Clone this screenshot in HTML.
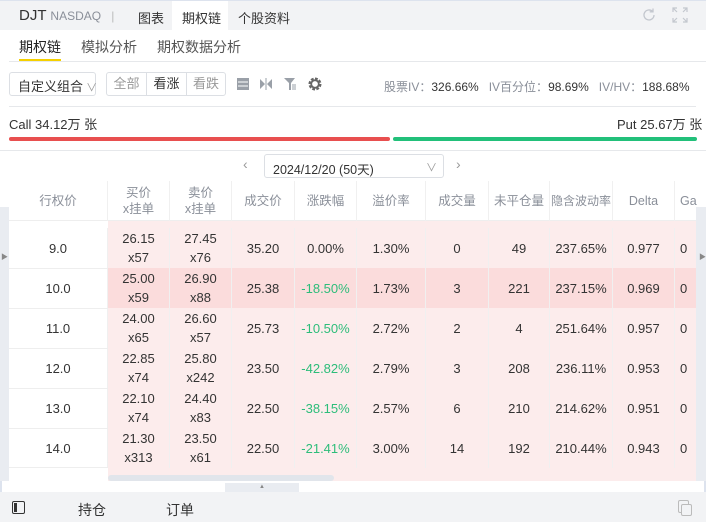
<!DOCTYPE html>
<html><head><meta charset="utf-8"><style>
*{box-sizing:border-box;margin:0;padding:0}
body{width:706px;height:522px;overflow:hidden;background:#fff;font-family:"Liberation Sans","Noto Sans CJK SC",sans-serif;color:#333;font-size:13px;position:relative}
.a{position:absolute}
.top{left:0;top:0;width:706px;height:30px;background:#f2f3f5;border-top:1px solid #dde3ee}
.t{white-space:nowrap}
.grid{position:absolute;left:9px;top:181px;width:687px}
.row{position:absolute;left:0;height:40px;display:flex;width:700px}
.c{height:40px;display:flex;flex-direction:column;justify-content:center;align-items:center;text-align:center;font-size:13px;line-height:19px;border-right:1px solid #f0f0f0;flex:none;white-space:nowrap}
.h .c{color:#8a8f99;font-size:12.5px;line-height:16px}
.w0{width:99px}.w1{width:62px}.w2{width:62px}.w3{width:63px}.w4{width:62px}.w5{width:69px}.w6{width:63px}.w7{width:61px}.w8{width:63px}.w9{width:62px}.w10{width:40px;align-items:flex-start!important;text-align:left;padding-left:5px;border:0}
.g{color:#2dbd7a}
</style></head><body>
<div class="a top"></div>
<div class="a" style="left:172px;top:1px;width:56px;height:29px;background:#fff"></div>
<div class="a t" style="left:19px;top:7px;font-size:15px;color:#333">DJT <span style="font-size:12px;color:#8a8f99">NASDAQ</span> <span style="color:#bbb;font-size:12px;margin-left:6px">|</span></div>
<div class="a t" style="left:138px;top:8px;font-size:13px">图表</div>
<div class="a t" style="left:182px;top:8px;font-size:13px">期权链</div>
<div class="a t" style="left:238px;top:8px;font-size:13px">个股资料</div>
<svg class="a" style="left:641px;top:7px" width="16" height="16" viewBox="0 0 16 16"><path d="M13 8a5 5 0 1 1-1.5-3.6M12 1.5v3.3H8.7" fill="none" stroke="#c3c7ce" stroke-width="1.3"/></svg>
<svg class="a" style="left:672px;top:7px" width="16" height="16" viewBox="0 0 16 16"><path d="M1 5V1h4M11 1h4v4M15 11v4h-4M5 15H1v-4M1 1l4 4M15 1l-4 4M15 15l-4-4M1 15l4-4" fill="none" stroke="#c3c7ce" stroke-width="1.2"/></svg>
<div class="a t" style="left:19px;top:37px;font-size:14px;color:#222">期权链</div>
<div class="a" style="left:19px;top:59px;width:42px;height:3px;background:#f5d000"></div>
<div class="a t" style="left:81px;top:37px;font-size:14px;color:#555">模拟分析</div>
<div class="a t" style="left:157px;top:37px;font-size:14px;color:#555">期权数据分析</div>
<div class="a" style="left:9px;top:61px;width:697px;height:1px;background:#e6e8eb"></div>
<div class="a t" style="left:9px;top:72px;width:87px;height:24px;border:1px solid #dcdfe4;border-radius:3px;font-size:13px;padding:3px 0 0 8px">自定义组合<span style="color:#999;font-size:11px"> ∨</span></div>
<div class="a" style="left:106px;top:72px;width:120px;height:24px;border:1px solid #dcdfe4;border-radius:3px;display:flex;font-size:13px">
<div style="width:40px;text-align:center;line-height:22px;color:#999;border-right:1px solid #dcdfe4">全部</div>
<div style="width:40px;text-align:center;line-height:22px;color:#333;border-right:1px solid #dcdfe4">看涨</div>
<div style="width:38px;text-align:center;line-height:22px;color:#999">看跌</div></div>
<svg class="a" style="left:236px;top:77px" width="14" height="14"><rect x="1" y="1" width="12" height="12" fill="#9aa0a8"/><path d="M2 5h10M2 9h10" stroke="#fff"/></svg>
<svg class="a" style="left:259px;top:77px" width="14" height="14"><path d="M1 2l5 5-5 5zM13 2l-5 5 5 5z" fill="#9aa0a8"/><path d="M7 1v12" stroke="#9aa0a8"/></svg>
<svg class="a" style="left:283px;top:77px" width="14" height="14"><path d="M1 1h11L8 6v7H6V6z" fill="#9aa0a8"/><path d="M9 8h4M9 10h4M9 12h4" stroke="#9aa0a8"/></svg>
<svg class="a" style="left:307px;top:76px" width="16" height="16" viewBox="0 0 16 16"><circle cx="8" cy="8" r="5" fill="none" stroke="#666" stroke-width="3" stroke-dasharray="2.6 1.3"/><circle cx="8" cy="8" r="3.8" fill="none" stroke="#666" stroke-width="1.8"/></svg>
<div class="a t" style="left:384px;top:78px;font-size:12px;color:#8a8f99">股票IV：<span style="color:#333">326.66%</span>&nbsp;&nbsp; IV百分位：<span style="color:#333">98.69%</span>&nbsp;&nbsp; IV/HV：<span style="color:#333">188.68%</span></div>
<div class="a" style="left:9px;top:106px;width:687px;height:1px;background:#e6e8eb"></div>
<div class="a t" style="left:9px;top:114px;font-size:13px">Call 34.12万 张</div>
<div class="a t" style="left:617px;top:114px;font-size:13px">Put 25.67万 张</div>
<div class="a" style="left:9px;top:137px;width:381px;height:4px;background:#e84f4f;border-radius:2px"></div>
<div class="a" style="left:393px;top:137px;width:304px;height:4px;background:#22c07a;border-radius:2px"></div>
<div class="a" style="left:0;top:150px;width:706px;height:1px;background:#e6e8eb"></div>
<div class="a" style="left:243px;top:156px;color:#999;font-size:14px">‹</div>
<div class="a t" style="left:264px;top:154px;width:180px;height:24px;border:1px solid #dcdfe4;border-radius:3px;padding:4px 0 0 8px;font-size:12.5px">2024/12/20 (50天)<span style="position:absolute;right:6px;color:#999;font-size:11px">∨</span></div>
<div class="a" style="left:456px;top:156px;color:#999;font-size:14px">›</div>
<div class="a" style="left:9px;top:220px;width:687px;height:1px;background:#eee"></div>
<div class="a" style="left:108px;top:221px;width:588px;height:265px;background:#fcecec"></div>
<div class="a" style="left:108px;top:268px;width:588px;height:40px;background:#fbdcdc"></div>
<div class="a" style="left:0;top:207px;width:9px;height:283px;background:#e9ecf1"></div>
<div class="a" style="left:1px;top:252px;font-size:7px;color:#888">▶</div>
<div class="a" style="left:696px;top:207px;width:10px;height:283px;background:#e9ecf1"></div>
<div class="a" style="left:699px;top:252px;font-size:7px;color:#888">▶</div>
<div class="grid">
<div class="row h" style="top:0">
<div class="c w0">行权价</div><div class="c w1">买价<br>x挂单</div><div class="c w2">卖价<br>x挂单</div><div class="c w3">成交价</div><div class="c w4">涨跌幅</div><div class="c w5">溢价率</div><div class="c w6">成交量</div><div class="c w7">未平仓量</div><div class="c w8" style="font-size:12px">隐含波动率</div><div class="c w9">Delta</div><div class="c w10">Ga</div></div>
<div class="row" style="top:47px"><div class="c w0">9.0</div><div class="c w1">26.15<br>x57</div><div class="c w2">27.45<br>x76</div><div class="c w3">35.20</div><div class="c w4">0.00%</div><div class="c w5">1.30%</div><div class="c w6">0</div><div class="c w7">49</div><div class="c w8">237.65%</div><div class="c w9">0.977</div><div class="c w10">0</div></div>
<div class="row" style="top:87px"><div class="c w0">10.0</div><div class="c w1">25.00<br>x59</div><div class="c w2">26.90<br>x88</div><div class="c w3">25.38</div><div class="c w4 g">-18.50%</div><div class="c w5">1.73%</div><div class="c w6">3</div><div class="c w7">221</div><div class="c w8">237.15%</div><div class="c w9">0.969</div><div class="c w10">0</div></div>
<div class="row" style="top:127px"><div class="c w0">11.0</div><div class="c w1">24.00<br>x65</div><div class="c w2">26.60<br>x57</div><div class="c w3">25.73</div><div class="c w4 g">-10.50%</div><div class="c w5">2.72%</div><div class="c w6">2</div><div class="c w7">4</div><div class="c w8">251.64%</div><div class="c w9">0.957</div><div class="c w10">0</div></div>
<div class="row" style="top:167px"><div class="c w0">12.0</div><div class="c w1">22.85<br>x74</div><div class="c w2">25.80<br>x242</div><div class="c w3">23.50</div><div class="c w4 g">-42.82%</div><div class="c w5">2.79%</div><div class="c w6">3</div><div class="c w7">208</div><div class="c w8">236.11%</div><div class="c w9">0.953</div><div class="c w10">0</div></div>
<div class="row" style="top:207px"><div class="c w0">13.0</div><div class="c w1">22.10<br>x74</div><div class="c w2">24.40<br>x83</div><div class="c w3">22.50</div><div class="c w4 g">-38.15%</div><div class="c w5">2.57%</div><div class="c w6">6</div><div class="c w7">210</div><div class="c w8">214.62%</div><div class="c w9">0.951</div><div class="c w10">0</div></div>
<div class="row" style="top:247px"><div class="c w0">14.0</div><div class="c w1">21.30<br>x313</div><div class="c w2">23.50<br>x61</div><div class="c w3">22.50</div><div class="c w4 g">-21.41%</div><div class="c w5">3.00%</div><div class="c w6">14</div><div class="c w7">192</div><div class="c w8">210.44%</div><div class="c w9">0.943</div><div class="c w10">0</div></div>
</div>
<div class="a" style="left:9px;top:268px;width:99px;height:1px;background:#eee"></div>
<div class="a" style="left:9px;top:308px;width:99px;height:1px;background:#eee"></div>
<div class="a" style="left:9px;top:348px;width:99px;height:1px;background:#eee"></div>
<div class="a" style="left:9px;top:388px;width:99px;height:1px;background:#eee"></div>
<div class="a" style="left:9px;top:428px;width:99px;height:1px;background:#eee"></div>
<div class="a" style="left:9px;top:467px;width:99px;height:1px;background:#eee"></div>
<div class="a" style="left:108px;top:475px;width:226px;height:6px;background:#e1e5eb;border-radius:3px"></div>
<div class="a" style="left:0;top:481px;width:706px;height:11px;background:#fff"></div>
<div class="a" style="left:0;top:481px;width:2px;height:11px;background:#dde3ee"></div>
<div class="a" style="left:704px;top:481px;width:2px;height:11px;background:#dde3ee"></div>
<div class="a" style="left:225px;top:483px;width:74px;height:9px;background:#e9ecf1;text-align:center;font-size:6px;line-height:9px;color:#888">▲</div>
<div class="a" style="left:0;top:492px;width:706px;height:30px;background:#f2f3f5"></div>
<div class="a" style="left:12px;top:501px;width:13px;height:13px;border:1.5px solid #333;border-radius:2px"><div style="width:3px;height:9px;background:#333;margin:1px"></div></div>
<div class="a t" style="left:78px;top:500px;font-size:14px">持仓</div>
<div class="a t" style="left:166px;top:500px;font-size:14px">订单</div>
<div class="a" style="left:678px;top:500px;width:11px;height:13px;border:1px solid #bbb;border-radius:2px"></div>
<div class="a" style="left:681px;top:504px;width:11px;height:12px;border:1px solid #bbb;border-radius:2px;background:#f2f3f5"></div>
</body></html>
